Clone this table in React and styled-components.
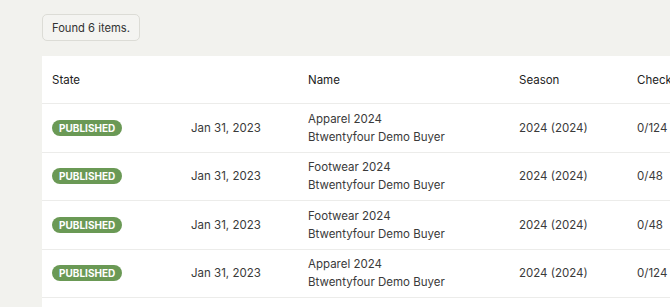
import React from 'react';
import styled, { createGlobalStyle } from 'styled-components';

const GlobalStyle = createGlobalStyle`
  html, body {
    margin: 0;
    padding: 0;
    background: #f2f2ee;
    overflow: hidden;
  }
  body {
    font-family: Inter, "Liberation Sans", Arial, sans-serif;
    color: #2b2b2b;
  }
`;

const Page = styled.div`
  padding: 14px 0 0 42px;
  display: flex;
  flex-direction: column;
  align-items: flex-start;
  gap: 15px;
`;

const FoundBadge = styled.div`
  height: 27px;
  box-sizing: border-box;
  padding: 0 9px;
  display: flex;
  align-items: center;
  font-size: 11.2px;
  color: #333;
  background: #f4f4f1;
  border: 1px solid #dcdcd6;
  border-radius: 5px;
`;

const COLS = '139px 117px 211px 118px 140px';

const Table = styled.div`
  background: #fff;
  width: 760px;
  padding-bottom: 10px;
`;

const Row = styled.div`
  display: grid;
  grid-template-columns: ${COLS};
  height: ${(p) => (p.$header ? 48 : 48.5)}px;
  align-items: center;
  border-bottom: 1px solid #ececea;
  box-sizing: border-box;
`;

const Cell = styled.div`
  padding-left: 10px;
  font-size: 11.5px;
  line-height: 18px;
  color: ${(p) => (p.$header ? '#222' : '#3a3a3a')};
  white-space: nowrap;
`;

const State = styled.span`
  display: inline-block;
  background: #6a9955;
  color: #fff;
  font-weight: 700;
  font-size: 10px;
  line-height: 16px;
  height: 16px;
  padding: 0 7px;
  border-radius: 8px;
`;

const rows = [
  { name: 'Apparel 2024', check: '0/124' },
  { name: 'Footwear 2024', check: '0/48' },
  { name: 'Footwear 2024', check: '0/48' },
  { name: 'Apparel 2024', check: '0/124' },
];

export default function App() {
  return (
    <>
      <GlobalStyle />
      <Page>
        <FoundBadge>Found 6 items.</FoundBadge>
        <Table>
          <Row $header>
            <Cell $header>State</Cell>
            <Cell $header></Cell>
            <Cell $header>Name</Cell>
            <Cell $header>Season</Cell>
            <Cell $header>Checklist</Cell>
          </Row>
          {rows.map((r, i) => (
            <Row key={i}>
              <Cell><State>PUBLISHED</State></Cell>
              <Cell>Jan 31, 2023</Cell>
              <Cell>
                {r.name}
                <br />
                Btwentyfour Demo Buyer
              </Cell>
              <Cell>2024 (2024)</Cell>
              <Cell>{r.check}</Cell>
            </Row>
          ))}
        </Table>
      </Page>
    </>
  );
}
